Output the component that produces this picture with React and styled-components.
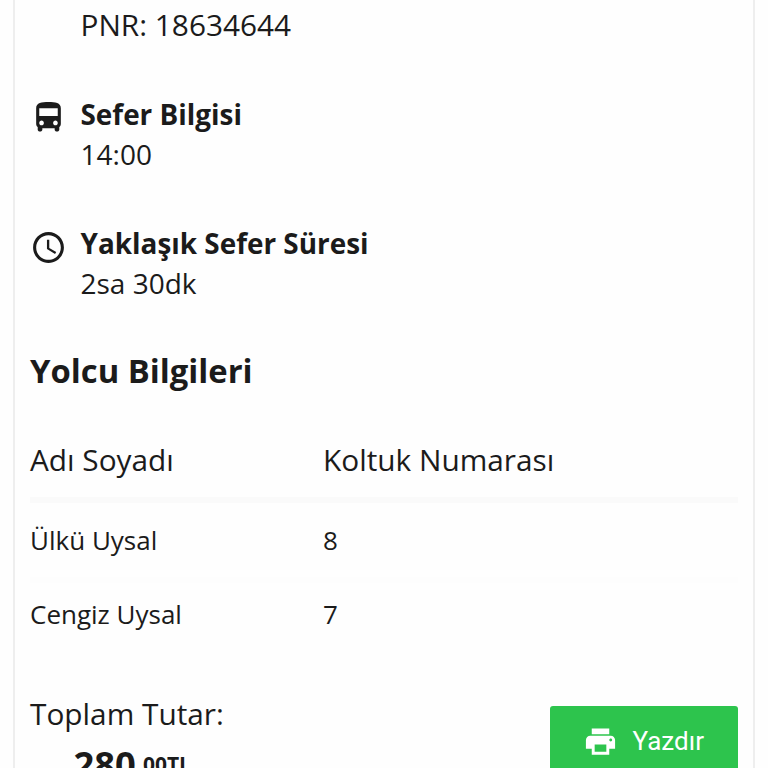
import React from 'react';
import styled, { createGlobalStyle, css } from 'styled-components';
import { MdAccessTime, MdDirectionsBus, MdPrint } from 'react-icons/md';

const GlobalStyle = createGlobalStyle`
  * {
    box-sizing: border-box;
  }
  body {
    margin: 0;
    background: #fefefe;
    color: #1b1b1b;
    font-family: 'Open Sans', 'Noto Sans', sans-serif;
  }
`

const Page = styled.div`
  height: 768px;
  padding: 0 13px;
  overflow: hidden;
`

const Ticket = styled.main`
  width: 742px;
  height: 840px;
  padding: 5px 15px 0;
  border: solid #eeeeee;
  border-width: 0 2px;
`

const InfoList = styled.div`
  display: flex;
  flex-direction: column;
  gap: 49px;
`

const InfoRow = styled.div`
  display: grid;
  grid-template-columns: 37px 1fr;
  column-gap: 13.5px;
`

const InfoIcon = styled.div`
  padding-top: ${props => props.$top}px;
  svg {
    display: block;
    width: 37px;
    height: 37px;
  }
`

const InfoTitle = styled.div`
  font-size: 27.9px;
  font-weight: 700;
  line-height: 40px;
`

const InfoText = styled.div`
  font-size: 28px;
  line-height: 40px;
  ${props => props.$large && css`
    font-size: 29.8px;
  `}
`

const SectionTitle = styled.h2`
  margin: 46px 0 47px;
  font-size: 32.8px;
  font-weight: 700;
  line-height: 44px;
`

const TableRow = styled.div`
  display: grid;
  grid-template-columns: 293px 1fr;
  height: 68px;
  padding-top: 11px;
  font-size: 26px;
  line-height: 40px;
  ${props => props.$divided && css`
    height: 80px;
    padding-top: 17px;
    border-bottom: 6px solid #fdfdfd;
  `}
`

const TableHead = styled(TableRow)`
  height: 63px;
  padding-top: 0;
  font-size: 29.8px;
  border-bottom: 6px solid #fafafa;
`

const Footer = styled.footer`
  display: flex;
  justify-content: space-between;
  align-items: flex-start;
  margin-top: 43px;
`

const TotalLabel = styled.div`
  font-size: 29.8px;
  line-height: 40px;
`

const Price = styled.div`
  display: flex;
  align-items: flex-start;
  padding: 4px 0 0 43.5px;
  font-size: 36.4px;
  font-weight: 700;
  line-height: 52px;
`

const Cents = styled.span`
  padding-left: 1px;
  font-size: 21px;
  line-height: 53px;
`

const PrintButton = styled.button`
  display: flex;
  align-items: center;
  gap: 15px;
  width: 188px;
  height: 70px;
  margin-top: 12.4px;
  padding: 0 0 1px 32.5px;
  border: 0;
  border-radius: 3px;
  background: #2dc44d;
  color: #fff;
  font-family: Roboto, sans-serif;
  font-size: 26px;
  svg {
    width: 35px;
    height: 35px;
    margin-top: 2px;
  }
`

const passengers = [
  { name: 'Ülkü Uysal', seat: 8 },
  { name: 'Cengiz Uysal', seat: 7 },
]

function Info({ icon, iconTop, title, text, large }) {
  return (
    <InfoRow>
      <InfoIcon $top={iconTop}>{icon}</InfoIcon>
      <div>
        {title && <InfoTitle>{title}</InfoTitle>}
        <InfoText $large={large}>{text}</InfoText>
      </div>
    </InfoRow>
  )
}

function PassengerTable() {
  return (
    <div>
      <TableHead>
        <div>Adı Soyadı</div>
        <div>Koltuk Numarası</div>
      </TableHead>
      {passengers.map((passenger, index) => (
        <TableRow key={passenger.name} $divided={index < passengers.length - 1}>
          <div>{passenger.name}</div>
          <div>{passenger.seat}</div>
        </TableRow>
      ))}
    </div>
  )
}

export default function App() {
  return (
    <Page>
      <GlobalStyle />
      <Ticket>
        <InfoList>
          <Info text="PNR: 18634644" large />
          <Info icon={<MdDirectionsBus />} iconTop={5} title="Sefer Bilgisi" text="14:00" />
          <Info icon={<MdAccessTime />} iconTop={6} title="Yaklaşık Sefer Süresi" text="2sa 30dk" />
        </InfoList>
        <SectionTitle>Yolcu Bilgileri</SectionTitle>
        <PassengerTable />
        <Footer>
          <div>
            <TotalLabel>Toplam Tutar:</TotalLabel>
            <Price>280<Cents>,00TL</Cents></Price>
          </div>
          <PrintButton>
            <MdPrint />
            Yazdır
          </PrintButton>
        </Footer>
      </Ticket>
    </Page>
  )
}
